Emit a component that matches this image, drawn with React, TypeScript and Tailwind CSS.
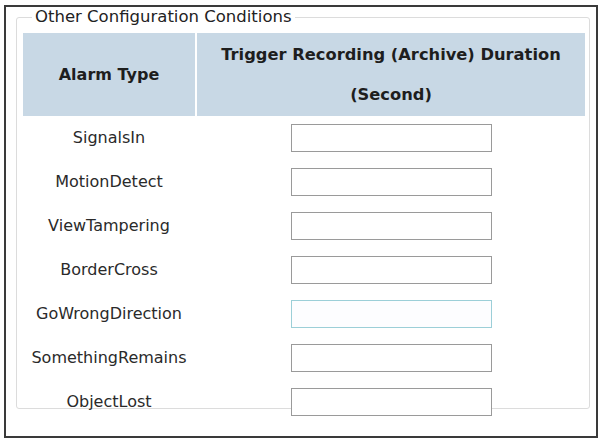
const alarms = [
  "SignalsIn",
  "MotionDetect",
  "ViewTampering",
  "BorderCross",
  "GoWrongDirection",
  "SomethingRemains",
  "ObjectLost",
];

export default function App() {
  return (
    <div className="w-[600px] h-[439px] bg-white pl-[4px] pt-[5px] font-['DejaVu_Sans',Verdana,sans-serif]">
      <div className="w-[594px] h-[433px] border-2 border-[#3a3a3a] pl-[10px] pr-[6px] pt-[1px]">
        <fieldset className="h-[401px] border border-[#dcdcdc] rounded-[3px] pl-[6px] pr-[4px] pt-[7px]">
          <legend className="ml-[9px] px-[3px] text-[16.5px] leading-[18px] text-[#222]">
            Other Configuration Conditions
          </legend>

          <div className="grid grid-cols-[172px_388px] gap-x-[2px]">
            {/* header */}
            <div className="h-[83px] bg-[#c8d8e5] flex items-center justify-center text-[16px] font-bold text-[#1e1e1e]">
              Alarm Type
            </div>
            <div className="h-[83px] bg-[#c8d8e5] flex flex-col items-center justify-center text-[16.3px] leading-[40px] font-bold text-[#1e1e1e]">
              <span>Trigger Recording (Archive) Duration</span>
              <span>(Second)</span>
            </div>

            {/* rows */}
            {alarms.map((name, i) => (
              <div key={name} className="contents">
                <div className="h-[44px] flex items-center justify-center text-[16px] text-[#2a2a2a]">
                  {name}
                </div>
                <div className="h-[44px] flex items-center justify-center">
                  <input
                    type="text"
                    className={
                      i === 4
                        ? "w-[201px] h-[28px] bg-[#fdfdff] border border-[#9ccfd8] outline-none"
                        : "w-[201px] h-[28px] bg-white border border-[#9a9a9a] outline-none"
                    }
                  />
                </div>
              </div>
            ))}
          </div>
        </fieldset>
      </div>
    </div>
  );
}
